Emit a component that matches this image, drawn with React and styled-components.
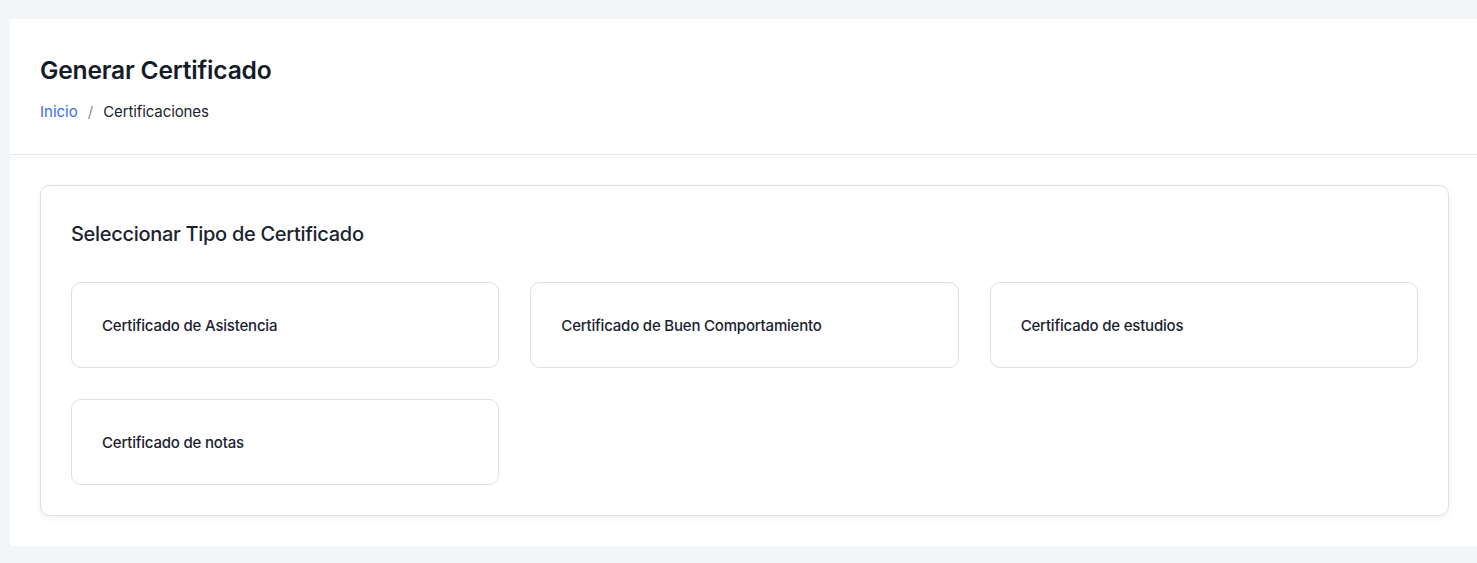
import React from "react"
import styled, { createGlobalStyle } from "styled-components"

const GlobalStyle = createGlobalStyle`
  html, body {
    margin: 0;
    padding: 0;
    background: #f3f6f9;
    font-family: Inter, "Noto Sans", sans-serif;
    color: #1b2330;
  }
`

const tipos = [
  "Certificado de Asistencia",
  "Certificado de Buen Comportamiento",
  "Certificado de estudios",
  "Certificado de notas",
]

const App = () => {
  return (
    <>
      <GlobalStyle />
      <Page>
        <Content>
          <Header>
            <Title>Generar Certificado</Title>
            <Breadcrumb>
              <Crumb href="#">Inicio</Crumb>
              <Sep>/</Sep>
              <Current>Certificaciones</Current>
            </Breadcrumb>
          </Header>
          <Body>
            <Card>
              <CardTitle>Seleccionar Tipo de Certificado</CardTitle>
              <Grid>
                {tipos.map((t) => (
                  <Option key={t}>{t}</Option>
                ))}
              </Grid>
            </Card>
          </Body>
        </Content>
      </Page>
    </>
  )
}

export default App

const Page = styled.div`
  padding: 19px 0 17px 10px;
  min-height: 563px;
  box-sizing: border-box;
`
const Content = styled.div`
  background: #fff;
`
const Header = styled.div`
  padding: 36px 30px 32px 30px;
  border-bottom: 1px solid #e3e6ea;
`
const Title = styled.h1`
  margin: 0;
  font-size: 24.6px;
  font-weight: 600;
  line-height: 30px;
  color: #141c28;
  letter-spacing: -0.2px;
`
const Breadcrumb = styled.div`
  display: flex;
  align-items: center;
  margin-top: 17px;
  font-size: 15px;
  line-height: 20px;
`
const Crumb = styled.a`
  color: #3b6cf6;
  text-decoration: none;
`
const Sep = styled.span`
  color: #8a8f98;
  margin: 0 10px;
`
const Current = styled.span`
  color: #1b2330;
  letter-spacing: -0.1px;
`
const Body = styled.div`
  padding: 30px 28px 30px 30px;
`
const Card = styled.div`
  background: #fff;
  border: 1px solid #dcdfe3;
  border-radius: 10px;
  box-shadow: 0 2px 6px rgba(0, 0, 0, 0.06);
  padding: 30px;
`
const CardTitle = styled.h2`
  margin: 6px 0 0 0;
  font-size: 20px;
  font-weight: 500;
  line-height: 24px;
  color: #1b2330;
  letter-spacing: -0.3px;
`
const Grid = styled.div`
  display: grid;
  grid-template-columns: repeat(3, 1fr);
  gap: 31px;
  margin-top: 36px;
`
const Option = styled.div`
  height: 86px;
  box-sizing: border-box;
  border: 1px solid #dcdfe3;
  border-radius: 10px;
  padding: 0 30px;
  display: flex;
  align-items: center;
  font-size: 15px;
  font-weight: 500;
  color: #1b2330;
  letter-spacing: -0.2px;
  cursor: pointer;
`
